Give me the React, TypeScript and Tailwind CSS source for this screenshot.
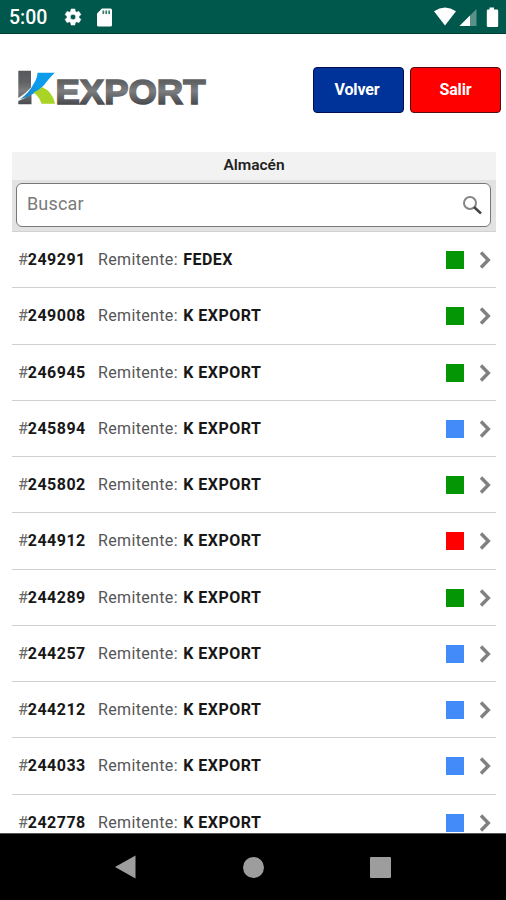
const GREEN = 'bg-[#049604]';
const BLUE = 'bg-[#438bf8]';
const RED = 'bg-[#ff0000]';

const rows = [
  { id: '249291', sender: 'FEDEX', color: GREEN },
  { id: '249008', sender: 'K EXPORT', color: GREEN },
  { id: '246945', sender: 'K EXPORT', color: GREEN },
  { id: '245894', sender: 'K EXPORT', color: BLUE },
  { id: '245802', sender: 'K EXPORT', color: GREEN },
  { id: '244912', sender: 'K EXPORT', color: RED },
  { id: '244289', sender: 'K EXPORT', color: GREEN },
  { id: '244257', sender: 'K EXPORT', color: BLUE },
  { id: '244212', sender: 'K EXPORT', color: BLUE },
  { id: '244033', sender: 'K EXPORT', color: BLUE },
  { id: '242778', sender: 'K EXPORT', color: BLUE },
];

function StatusBar() {
  return (
    <div className="flex h-[34px] shrink-0 items-center border-b border-[#003f36] bg-[#00574b] pl-[9px] text-white">
      <span className="w-[54px] pt-[3px] text-[19.500px] leading-none font-medium">5:00</span>
      <svg className="mt-px h-[20px] w-[20px]" viewBox="0 0 24 24" fill="currentColor" stroke="currentColor" strokeWidth=".7">
        <path d="M19.14 12.94c.04-.3.06-.61.06-.94s-.02-.64-.07-.94l2.03-1.58a.49.49 0 0 0 .12-.61l-1.92-3.32a.49.49 0 0 0-.59-.22l-2.39.96a7 7 0 0 0-1.62-.94l-.36-2.54a.48.48 0 0 0-.48-.41h-3.84a.47.47 0 0 0-.47.41l-.36 2.54c-.59.24-1.13.57-1.62.94l-2.39-.96a.48.48 0 0 0-.59.22L2.74 8.87a.47.47 0 0 0 .12.61l2.03 1.58c-.05.3-.09.63-.09.94s.02.64.07.94l-2.03 1.58a.49.49 0 0 0-.12.61l1.92 3.32c.12.22.37.29.59.22l2.39-.96c.5.38 1.03.7 1.62.94l.36 2.54c.05.24.24.41.48.41h3.84c.24 0 .44-.17.47-.41l.36-2.54a7 7 0 0 0 1.62-.94l2.39.96c.22.08.47 0 .59-.22l1.92-3.32a.47.47 0 0 0-.12-.61zM12 15.3a3.3 3.3 0 1 1 0-6.6 3.3 3.3 0 0 1 0 6.6" />
      </svg>
      <svg className="mt-px ml-[14px] h-[19px] w-[15px]" viewBox="0 0 15 19">
        <path d="M5 .5h8.500Q15 .5 15 2v15q0 1.500-1.500 1.500h-12Q0 18.500 0 17V5.500z" fill="#fff" />
        <path d="M5.500 2.500h1.700v3.500H5.500zM8.400 2.500h1.700v3.500H8.400zM11.300 2.500H13v3.500h-1.700z" fill="#39776e" />
      </svg>
      <svg className="mt-px ml-auto h-[20px] w-[72px]" viewBox="434 7 72 20">
        <path d="M434 11.200Q445 3.800 456 11.200L445 25.500z" fill="#fff" />
        <path d="M476.500 9v17H459.500z" fill="#5a9189" />
        <path d="M470 15.500V26H459.500z" fill="#fff" />
        <path d="M489.500 7.500h4.500v2h3q1.200 0 1.200 1.200v15q0 1.200-1.200 1.200h-9q-1.200 0-1.200-1.200v-15q0-1.200 1.200-1.200h1.500z" fill="#fff" />
      </svg>
    </div>
  );
}

function Logo() {
  return (
    <svg className="h-[50px] w-[192px] overflow-visible" viewBox="16 68 192 50" role="img" aria-label="KEXPORT">
      <defs>
        <linearGradient id="metal" gradientUnits="userSpaceOnUse" x1="0" y1="70" x2="0" y2="105">
          <stop offset="0" stopColor="#55585b" />
          <stop offset=".35" stopColor="#606264" />
          <stop offset=".6" stopColor="#7b7d7f" />
          <stop offset="1" stopColor="#45474a" />
        </linearGradient>
        <linearGradient id="sky" x1="0" y1="1" x2="1" y2="0">
          <stop offset="0" stopColor="#1e7cc0" />
          <stop offset=".5" stopColor="#0b9cec" />
        </linearGradient>
      </defs>
      <path d="M18.300 70.800H31V87.500Q26 93.500 18.300 98z" fill="url(#metal)" />
      <path d="M18.300 101Q26 98 31.500 93.500V104.300H18.300z" fill="url(#metal)" />
      <path d="M37.500 72.700H54.800Q48 79.500 44.500 84.500Q36 95 20 99.300Q29.500 92.500 33.500 84Q37.500 78 37.500 72.700z" fill="url(#sky)" />
      <path d="M33.500 92.500Q39 90.500 42 87Q52.500 91.500 55.200 103.800H41.500Q39.500 97 33.500 92.500z" fill="#a9d425" />
      <text x="55.500" y="103.500" textLength="150" lengthAdjust="spacingAndGlyphs" fontFamily="'Liberation Sans', Arial, sans-serif" fontWeight="700" fontSize="35.500" fill="url(#metal)" stroke="url(#metal)" strokeWidth="1.600">EXPORT</text>
    </svg>
  );
}

function Row({ id, sender, color }: { id: string; sender: string; color: string }) {
  return (
    <li className="flex h-[56.250px] shrink-0 items-center border-b-[1.500px] border-[#d0d0d0] pr-[5px] pl-[6px] text-[16px] text-[#171717]">
      <span className="w-[80px] pt-px whitespace-nowrap">
        <span className="text-[#666]">#</span>
        <b className="font-bold tracking-[0.450px]">{id}</b>
      </span>
      <span className="w-[85.300px] pt-px whitespace-nowrap text-[#555] tracking-[0.350px]">Remitente:</span>
      <b className="pt-px whitespace-nowrap font-bold tracking-[0.450px]">{sender}</b>
      <span className={`mt-px mr-[15px] ml-auto h-[18px] w-[18px] ${color}`} />
      <svg className="mt-px h-[18px] w-[12px]" viewBox="0 0 12 18" fill="none" stroke="#808080" strokeWidth="3.400">
        <path d="M2 1.500L9.300 9L2 16.500" />
      </svg>
    </li>
  );
}

export default function App() {
  return (
    <div className="flex h-[900px] w-[506px] flex-col overflow-hidden bg-white font-[Roboto,sans-serif]">
      <StatusBar />
      <header className="flex h-[118px] shrink-0 items-start pt-[33px] pr-[5px] pl-[16px]">
        <div className="mt-px"><Logo /></div>
        <div className="ml-auto flex gap-[6px] text-[16px] font-bold text-white">
          <button className="h-[46px] w-[91px] rounded-[4px] border border-[#02104e] bg-[#003399] pr-[3px] tracking-[-0.150px]">Volver</button>
          <button className="h-[46px] w-[91px] rounded-[4px] border border-[#550c0c] bg-[#ff0000] tracking-[-0.150px]">Salir</button>
        </div>
      </header>
      <main className="mr-[10px] ml-[12px] flex min-h-0 flex-1 flex-col overflow-hidden">
        <h1 className="flex h-[28px] shrink-0 items-center justify-center bg-[#f2f2f2] text-[15.500px] font-semibold text-[#222]">Almacén</h1>
        <div className="flex h-[52px] shrink-0 border-b border-[#d2d2d2] bg-[#e2e2e2] pr-[5px] pl-[4px] pt-[3px] pb-[4px]">
          <div className="flex flex-1 items-center rounded-[6px] border border-[#777] bg-white pr-[8px] pl-[10px]">
            <span className="-mt-[3px] text-[18px] tracking-[0.150px] text-[#7a7a7a]">Buscar</span>
            <svg className="ml-auto h-[20px] w-[20px]" viewBox="0 0 20 20" fill="none">
              <circle cx="8" cy="8" r="6" stroke="#858585" strokeWidth="2" />
              <path d="M12 12L19 18.500" stroke="#444" strokeWidth="2.500" />
            </svg>
          </div>
        </div>
        <ul className="flex flex-col">
          {rows.map((row) => (
            <Row key={row.id} {...row} />
          ))}
        </ul>
      </main>
      <nav className="flex h-[67px] shrink-0 items-center border-t border-[#555] bg-black pl-[115px] text-[#9d9d9d]">
        <svg className="h-[24px] w-[21px]" viewBox="0 0 21 24" fill="currentColor">
          <path d="M20.500.5v23L0 12z" />
        </svg>
        <span className="ml-[107px] h-[21px] w-[21px] rounded-full bg-[#9d9d9d]" />
        <span className="ml-[106px] h-[21px] w-[21px] rounded-[1px] bg-[#9d9d9d]" />
      </nav>
    </div>
  );
}
